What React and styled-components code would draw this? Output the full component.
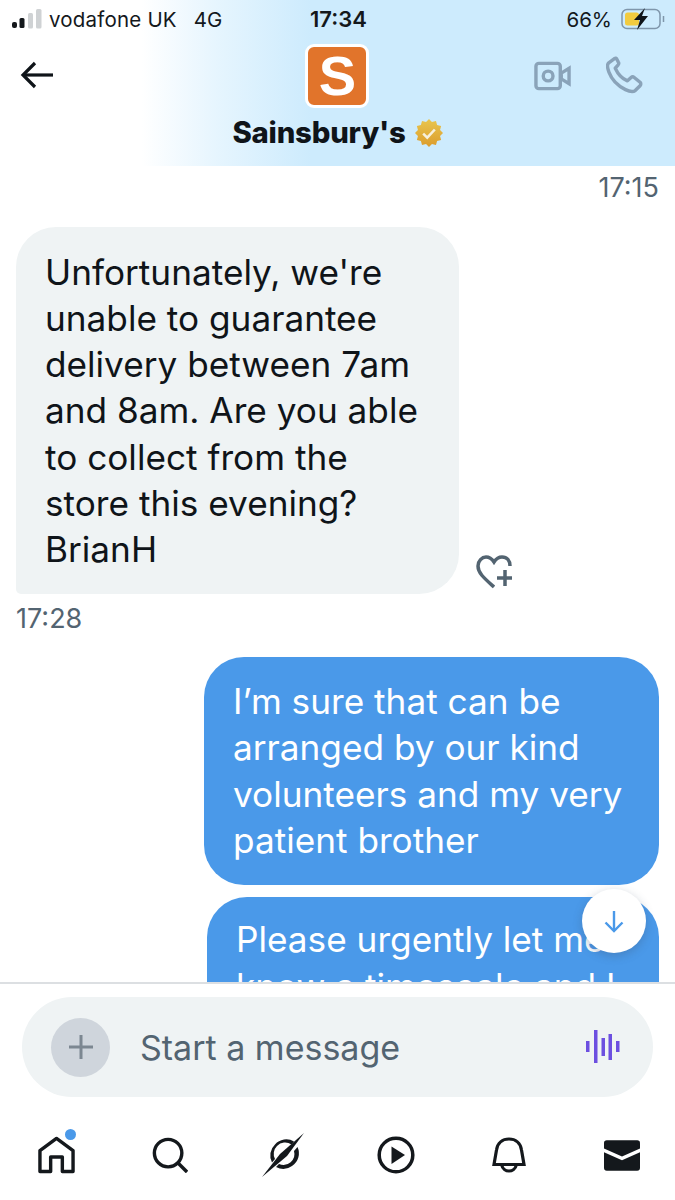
import styled, { createGlobalStyle } from "styled-components";

const GlobalStyle = createGlobalStyle`
  html, body {
    margin: 0;
    padding: 0;
    background: #fff;
  }
  * {
    box-sizing: border-box;
  }
`;

const Page = styled.div`
  position: relative;
  width: 675px;
  height: 1200px;
  display: flex;
  flex-direction: column;
  overflow: hidden;
  background: #fff;
  color: #0f1419;
  font-family: Inter, "Liberation Sans", sans-serif;
`;

const Header = styled.header`
  flex: 0 0 166px;
  height: 166px;
  display: flex;
  flex-direction: column;
  background: linear-gradient(90deg, #fff 21%, #e6f5fe 32%, #cdebfd 46%, #cdebfd 100%);
`;

const StatusBar = styled.div`
  height: 38px;
  padding: 0 10px 0 12px;
  display: grid;
  grid-template-columns: 1fr auto 1fr;
  align-items: center;
  font-size: 20.5px;
  color: #14181c;
`;

const StatusLeft = styled.div`
  display: flex;
  align-items: center;
  gap: 7px;
`;

const Carrier = styled.span`
  letter-spacing: 0.2px;
`;

const Network = styled.span`
  margin-left: 10px;
`;

const Clock = styled.span`
  font-weight: 600;
  font-size: 22px;
`;

const StatusRight = styled.div`
  display: flex;
  align-items: center;
  justify-content: flex-end;
  gap: 9px;
`;

const TitleRow = styled.div`
  flex: 1;
  display: grid;
  grid-template-columns: 1fr auto 1fr;
  padding-top: 6px;
`;

const BackButton = styled.div`
  padding: 16px 0 0 20px;
`;

const Identity = styled.div`
  display: flex;
  flex-direction: column;
  align-items: center;
`;

const Logo = styled.div`
  width: 64px;
  height: 64px;
  border: 3px solid #fff;
  border-radius: 9px;
  background: #e1742b;
  color: #fff;
  display: flex;
  align-items: center;
  justify-content: center;
  font-family: "Liberation Sans", sans-serif;
  font-size: 56px;
  font-weight: 700;
  line-height: 1;
`;

const NameRow = styled.div`
  display: flex;
  align-items: center;
  gap: 9px;
  margin-top: 7px;
  font-size: 29.3px;
  font-weight: 800;
  line-height: 36px;
  letter-spacing: -0.2px;
`;

const HeaderActions = styled.div`
  display: flex;
  justify-content: flex-end;
  gap: 35px;
  padding: 12px 32px 0 0;
`;

const VideoSlot = styled.div`
  padding-top: 5px;
`;

const Conversation = styled.main`
  flex: 1;
  min-height: 0;
  overflow: hidden;
  display: flex;
  flex-direction: column;
  padding: 7px 16px 0;
`;

const Timestamp = styled.div`
  font-size: 27px;
  line-height: 30px;
  color: #536471;
  text-align: ${(p) => (p.$right ? "right" : "left")};
`;

const ReceivedRow = styled.div`
  display: flex;
  align-items: flex-end;
  gap: 17px;
  margin-top: 24px;
`;

const Bubble = styled.div`
  flex: none;
  font-size: 35.2px;
  line-height: 46.3px;
  padding: 21.5px 29px;
  white-space: nowrap;
`;

const ReceivedBubble = styled(Bubble)`
  width: 443px;
  background: #eff3f4;
  color: #0f1419;
  border-radius: 40px 40px 40px 5px;
`;

const SentBubble = styled(Bubble)`
  align-self: flex-end;
  width: ${(p) => p.$width}px;
  margin-top: ${(p) => p.$top}px;
  padding-top: ${(p) => p.$padTop}px;
  background: #4a99e9;
  color: #fff;
  border-radius: 40px;
`;

const HeartAction = styled.div`
  margin-bottom: 5px;
  line-height: 0;
`;

const ReceivedTime = styled(Timestamp)`
  margin-top: 10px;
`;

const ScrollButton = styled.div`
  position: absolute;
  left: 582px;
  top: 889px;
  width: 64px;
  height: 64px;
  border-radius: 50%;
  background: #fff;
  box-shadow: 0 3px 10px rgba(60, 80, 110, 0.3);
  display: flex;
  align-items: center;
  justify-content: center;
`;

const Composer = styled.div`
  flex: 0 0 138px;
  border-top: 2px solid #dcdfe2;
  padding: 13px 22px 0;
`;

const ComposerPill = styled.div`
  height: 100px;
  width: 631px;
  border-radius: 50px;
  background: #eff3f4;
  display: flex;
  align-items: center;
  padding: 0 33px 0 29px;
`;

const AddButton = styled.div`
  width: 59px;
  height: 59px;
  border-radius: 50%;
  background: #cfd5dc;
  display: flex;
  align-items: center;
  justify-content: center;
`;

const Placeholder = styled.span`
  flex: 1;
  margin-left: 30px;
  font-size: 34px;
  color: #536471;
`;

const TabBar = styled.nav`
  flex: 0 0 80px;
  display: grid;
  grid-template-columns: repeat(6, 113px);
  align-items: start;
  padding-top: 16px;
`;

const Tab = styled.div`
  position: relative;
  height: 38px;
  display: flex;
  align-items: center;
  justify-content: center;
  line-height: 0;
`;

const NotifyDot = styled.span`
  position: absolute;
  top: -7px;
  left: 65px;
  width: 11px;
  height: 11px;
  border-radius: 50%;
  background: #4a99e9;
`;

const SignalBars = () => (
  <svg width="30" height="20" viewBox="0 0 30 20">
    <rect x="0" y="13" width="5" height="6" rx="2" fill="#14181c" />
    <rect x="7.500" y="9" width="5" height="10" rx="1.500" fill="#14181c" />
    <rect x="16" y="4" width="5" height="15.500" rx="1.500" fill="#cfd2d4" />
    <rect x="24" y="0" width="5.500" height="19.500" rx="1.500" fill="#cfd2d4" />
  </svg>
);

const Battery = () => (
  <svg width="44" height="22" viewBox="0 0 44 22">
    <rect x="1" y="1.500" width="38" height="19" rx="5" fill="none" stroke="#7f96ab" strokeWidth="1.500" />
    <rect x="4" y="4.500" width="14" height="13" rx="2.500" fill="#f2cb3f" />
    <path d="M42.500 8v6" fill="none" stroke="#7f96ab" strokeWidth="1.500" />
    <path d="M24 0L13 12h6l-3 10 11-14h-6z" fill="#0f1419" />
  </svg>
);

const BackArrow = () => (
  <svg width="34" height="30" viewBox="0 0 34 30" fill="none" stroke="#0f1419" strokeWidth="3.200">
    <path d="M33 15H3" />
    <path d="M15 3L3 15l12 12" />
  </svg>
);

// 12 pointed seal, computed so the points stay even
const sealPoints = Array.from({ length: 24 }, (_, i) => {
  const r = i % 2 === 0 ? 12 : 9.8;
  const a = (i * Math.PI) / 12;
  return `${(12 + r * Math.sin(a)).toFixed(2)},${(12 - r * Math.cos(a)).toFixed(2)}`;
}).join(" ");

const VerifiedBadge = () => (
  <svg width="28" height="28" viewBox="0 0 24 24">
    <defs>
      <linearGradient id="gold" x1="0" y1="0" x2="0" y2="1">
        <stop offset="0" stopColor="#e8c64e" />
        <stop offset="1" stopColor="#dc9c2c" />
      </linearGradient>
    </defs>
    <polygon points={sealPoints} fill="url(#gold)" strokeLinejoin="round" />
    <path d="M7 12.500l3.500 3.500 6.500-7" fill="none" stroke="#f7f0dc" strokeWidth="2.200" />
  </svg>
);

const VideoIcon = () => (
  <svg width="37" height="30" viewBox="0 0 38 30" fill="none" stroke="#8aa3b9" strokeWidth="3.500">
    <rect x="2" y="2" width="25" height="26" rx="3" />
    <circle cx="14.500" cy="15" r="5" />
    <path d="M28 12l8-5v16l-8-5z" />
  </svg>
);

const PhoneIcon = () => (
  <svg width="37" height="38" viewBox="0 0 38 38" fill="none" stroke="#8aa3b9" strokeWidth="3.500" strokeLinejoin="round">
    <path d="M9 2L2.800 6.500C1 8 1.500 12 3 16c3 8 9 14 17 18 4 2 8 2.500 10 1l5-5c1-1 1-2.500 0-3.500l-6-5c-1-.8-2.300-.8-3.200 0L22 25c-6-2.500-10-7.500-12.500-13l3-3.500c.8-1 .8-2 0-3L11 2.500C10.500 1.700 9.700 1.500 9 2z" />
  </svg>
);

const HeartPlus = () => (
  <svg width="37" height="34" viewBox="0 0 37 34" fill="none" stroke="#536471" strokeWidth="3.500">
    <path d="M18 32C8 23 2 18 2 11c0-5 4-9 8-9 4 0 6 2 8 5 2-3 5-5 8-5 5 0 8 3.500 8 9" />
    <path d="M29 15v16M21 23h15" />
  </svg>
);

const DownArrow = () => (
  <svg width="22" height="24" viewBox="0 0 22 24" fill="none" stroke="#4a99e9" strokeWidth="2.400">
    <path d="M11 2v20" />
    <path d="M2.500 13.500L11 22l8.500-8.500" />
  </svg>
);

const PlusIcon = () => (
  <svg width="26" height="26" viewBox="0 0 26 26" stroke="#7c8791" strokeWidth="3">
    <path d="M13 1v24M1 13h24" />
  </svg>
);

const VoiceIcon = () => (
  <svg width="34" height="34" viewBox="0 0 34 34" fill="#6c4fe0">
    <rect x="0" y="11" width="3.500" height="11" />
    <rect x="8" y="0" width="3.500" height="33" />
    <rect x="15.500" y="8" width="3.500" height="18" />
    <rect x="22.500" y="4" width="3.500" height="26" />
    <rect x="30" y="11" width="3.500" height="11" />
  </svg>
);

const HomeIcon = () => (
  <svg width="37" height="38" viewBox="0 0 38 38" fill="none" stroke="#14181c" strokeWidth="3.500" strokeLinejoin="round">
    <path d="M2 14.500L19 2l17 12.500V36H25V21H13v15H2z" />
  </svg>
);

const SearchIcon = () => (
  <svg width="36" height="36" viewBox="0 0 38 38" fill="none" stroke="#14181c" strokeWidth="3.600">
    <circle cx="17" cy="17" r="14.500" />
    <path d="M27.500 27.500L37 37" />
  </svg>
);

const SpacesIcon = () => (
  <svg width="46" height="46" viewBox="0 0 46 46">
    <path
      d="M15 12.500a15 15 0 0 1 19-3l-2.500 3a11 11 0 0 0-14.500 1.500 11 11 0 0 0-2 13l-3 3.500a15 15 0 0 1 3-18zM32 34a15 15 0 0 1-16 1l3-3a11 11 0 0 0 15-13l3.500-4a15 15 0 0 1-5.500 19z"
      fill="#14181c"
    />
    <path d="M44 1L27 24 2 45 20 22z" fill="#14181c" />
  </svg>
);

const PlayIcon = () => (
  <svg width="38" height="38" viewBox="0 0 38 38">
    <circle cx="19" cy="19" r="16.800" fill="none" stroke="#14181c" strokeWidth="3.500" />
    <path d="M14.500 10.500L28 19l-13.500 9z" fill="#14181c" />
  </svg>
);

const BellIcon = () => (
  <svg width="34" height="36" viewBox="0 0 34 36" fill="none" stroke="#14181c" strokeWidth="3.200">
    <path d="M2 27.500L4.500 13C5.500 6 10.500 2 17 2s11.500 4 12.500 11L32 27.500z" />
    <path d="M9.500 27.500c1 4.500 4.500 6.500 7.500 6.500s6.500-2 7.500-6.500" />
  </svg>
);

const MailIcon = () => (
  <svg width="36" height="33" viewBox="0 0 38 34">
    <path d="M3 1h32a3 3 0 0 1 3 3v5.500L19 18 0 9.500V4a3 3 0 0 1 3-3z" fill="#14181c" />
    <path d="M0 13.500L19 22l19-8.500V30a3 3 0 0 1-3 3H3a3 3 0 0 1-3-3z" fill="#14181c" />
  </svg>
);

const receivedLines = [
  "Unfortunately, we're",
  "unable to guarantee",
  "delivery between 7am",
  "and 8am. Are you able",
  "to collect from the",
  "store this evening?",
  "BrianH",
];

const sentLines = [
  "I\u2019m sure that can be",
  "arranged by our kind",
  "volunteers and my very",
  "patient brother",
];

const pendingLines = ["Please urgently let me", "know a timescale and I"];

const tabs = [HomeIcon, SearchIcon, SpacesIcon, PlayIcon, BellIcon, MailIcon];

function renderLines(lines) {
  return lines.map((line) => <div key={line}>{line}</div>);
}

function App() {
  return (
    <>
      <GlobalStyle />
      <Page>
        <Header>
          <StatusBar>
            <StatusLeft>
              <SignalBars />
              <Carrier>vodafone UK</Carrier>
              <Network>4G</Network>
            </StatusLeft>
            <Clock>17:34</Clock>
            <StatusRight>
              <span>66%</span>
              <Battery />
            </StatusRight>
          </StatusBar>
          <TitleRow>
            <BackButton>
              <BackArrow />
            </BackButton>
            <Identity>
              <Logo>S</Logo>
              <NameRow>
                Sainsbury's
                <VerifiedBadge />
              </NameRow>
            </Identity>
            <HeaderActions>
              <VideoSlot>
                <VideoIcon />
              </VideoSlot>
              <PhoneIcon />
            </HeaderActions>
          </TitleRow>
        </Header>

        <Conversation>
          <Timestamp $right>17:15</Timestamp>
          <ReceivedRow>
            <ReceivedBubble>{renderLines(receivedLines)}</ReceivedBubble>
            <HeartAction>
              <HeartPlus />
            </HeartAction>
          </ReceivedRow>
          <ReceivedTime>17:28</ReceivedTime>
          <SentBubble $width={455} $top={23} $padTop={21}>
            {renderLines(sentLines)}
          </SentBubble>
          <SentBubble $width={452} $top={12} $padTop={19.5}>
            {renderLines(pendingLines)}
          </SentBubble>
        </Conversation>

        <ScrollButton>
          <DownArrow />
        </ScrollButton>

        <Composer>
          <ComposerPill>
            <AddButton>
              <PlusIcon />
            </AddButton>
            <Placeholder>Start a message</Placeholder>
            <VoiceIcon />
          </ComposerPill>
        </Composer>

        <TabBar>
          {tabs.map((Icon, i) => (
            <Tab key={i}>
              <Icon />
              {i === 0 && <NotifyDot />}
            </Tab>
          ))}
        </TabBar>
      </Page>
    </>
  );
}

export default App;
